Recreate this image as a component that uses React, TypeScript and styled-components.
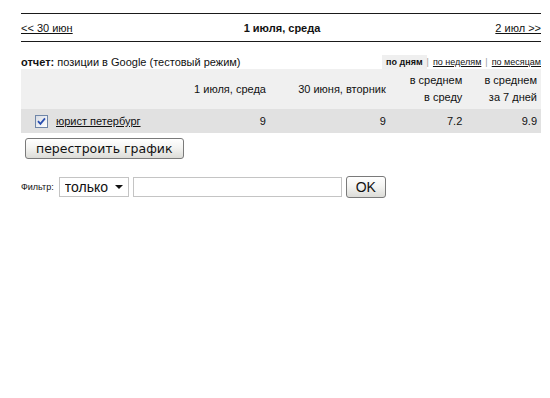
import * as React from "react";
import styled, { createGlobalStyle } from "styled-components";

const GlobalStyle = createGlobalStyle`
  html, body {
    margin: 0;
    padding: 0;
    background: #fff;
  }
  body {
    font-family: "Liberation Sans", Arial, sans-serif;
    font-size: 11px;
    color: #111;
  }
`;

const Page = styled.div`
  width: 520px;
  padding: 13px 0 0 21px;
`;

const DayNav = styled.div`
  display: flex;
  justify-content: space-between;
  align-items: center;
  height: 27px;
  border-top: 1px solid #1a1a1a;
  border-bottom: 1px solid #1a1a1a;
  font-size: 11px;
`;

const NavLink = styled.a`
  color: #111;
  text-decoration: underline;
  cursor: pointer;
`;

const Today = styled.b`
  font-size: 11px;
  margin-right: 4px;
`;

const ReportBar = styled.div`
  display: flex;
  justify-content: space-between;
  align-items: center;
  box-sizing: border-box;
  height: 27px;
  padding-top: 12px;
`;

const Title = styled.div`
  font-size: 11px;
  b {
    font-weight: bold;
  }
`;

const Periods = styled.div`
  display: flex;
  align-items: center;
  font-size: 9px;
  color: #999;
`;

const Period = styled.span<{ $active?: boolean }>`
  padding: 2px 4px;
  color: #111;
  font-weight: ${(p) => (p.$active ? "bold" : "normal")};
  background: ${(p) => (p.$active ? "#efefef" : "transparent")};
  text-decoration: ${(p) => (p.$active ? "none" : "underline")};
  cursor: pointer;
  &:last-child {
    padding-right: 0;
  }
`;

const Table = styled.table`
  width: 520px;
  border-collapse: collapse;
  font-size: 11px;
  th {
    font-weight: normal;
    text-align: right;
    padding: 3px 4px;
    line-height: 17px;
    background: #f0f0f0;
    height: 32px;
    vertical-align: middle;
  }
  td {
    text-align: right;
    padding: 0 4px;
    height: 24px;
    background: #e1e1e1;
  }
`;

const KeywordCell = styled.td`
  && {
    text-align: left;
    padding-left: 14px;
  }
  label {
    display: flex;
    align-items: center;
    gap: 8px;
    cursor: pointer;
  }
  input {
    display: none;
  }
`;

const CheckBox = styled.span`
  display: inline-flex;
  align-items: center;
  justify-content: center;
  box-sizing: border-box;
  width: 13px;
  height: 13px;
  border: 1px solid #6f86a8;
  background: linear-gradient(135deg, #d8dce4, #ffffff);
`;

const Button = styled.button`
  font-family: "DejaVu Sans", Verdana, sans-serif;
  font-size: 12.5px;
  color: #111;
  background: linear-gradient(#ffffff, #f4f4f2 45%, #dcdcd8);
  border: 1px solid #7a7a7a;
  border-radius: 3px;
  padding: 0 10px;
  height: 21px;
  cursor: pointer;
`;

const Rebuild = styled.div`
  padding: 5px 0 0 4px;
`;

const FilterRow = styled.div`
  display: flex;
  align-items: center;
  gap: 4px;
  margin-top: 17px;
`;

const FilterLabel = styled.span`
  font-size: 9px;
  margin-right: 1px;
`;

const SelectWrap = styled.div`
  position: relative;
  width: 70px;
  height: 20px;
`;

const Select = styled.select`
  appearance: none;
  width: 100%;
  height: 100%;
  box-sizing: border-box;
  border: 1px solid #c4c4c4;
  background: #fff;
  font-family: "Liberation Sans", Arial, sans-serif;
  font-size: 14px;
  color: #111;
  padding: 0 0 0 5px;
`;

const Arrow = styled.span`
  position: absolute;
  right: 6px;
  top: 8px;
  border-left: 4px solid transparent;
  border-right: 4px solid transparent;
  border-top: 4px solid #111;
  pointer-events: none;
`;

const TextInput = styled.input`
  width: 209px;
  height: 20px;
  box-sizing: border-box;
  border: 1px solid #c4c4c4;
  padding: 0 3px;
`;

const OkButton = styled(Button)`
  width: 40px;
  padding: 0;
  font-family: "Liberation Sans", Arial, sans-serif;
  font-size: 14px;
  height: 22px;
`;

export default function App() {
  const [checked, setChecked] = React.useState(true);
  return (
    <Page>
      <GlobalStyle />
      <DayNav>
        <NavLink>&lt;&lt; 30 июн</NavLink>
        <Today>1 июля, среда</Today>
        <NavLink>2 июл &gt;&gt;</NavLink>
      </DayNav>
      <ReportBar>
        <Title>
          <b>отчет:</b> позиции в Google (тестовый режим)
        </Title>
        <Periods>
          <Period $active>по дням</Period>|<Period>по неделям</Period>|
          <Period>по месяцам</Period>
        </Periods>
      </ReportBar>
      <Table>
        <thead>
          <tr>
            <th style={{ width: 150 }}></th>
            <th style={{ width: 90 }}>1 июля, среда</th>
            <th style={{ width: 116 }}>30 июня, вторник</th>
            <th style={{ width: 70 }}>
              в среднем
              <br />в среду
            </th>
            <th style={{ width: 68 }}>
              в среднем
              <br />
              за 7 дней
            </th>
          </tr>
        </thead>
        <tbody>
          <tr>
            <KeywordCell>
              <label>
                <input
                  type="checkbox"
                  checked={checked}
                  onChange={(e) => setChecked(e.target.checked)}
                />
                <CheckBox>
                  {checked && (
                    <svg width="9" height="9" viewBox="0 0 9 9">
                      <path
                        d="M1 4.2 L3.4 6.8 L8 1.4"
                        fill="none"
                        stroke="#2a4fb0"
                        strokeWidth="1.8"
                      />
                    </svg>
                  )}
                </CheckBox>
                <NavLink>юрист петербург</NavLink>
              </label>
            </KeywordCell>
            <td>9</td>
            <td>9</td>
            <td>7.2</td>
            <td>9.9</td>
          </tr>
        </tbody>
      </Table>
      <Rebuild>
        <Button>перестроить график</Button>
      </Rebuild>
      <FilterRow>
        <FilterLabel>Фильтр:</FilterLabel>
        <SelectWrap>
          <Select defaultValue="only">
            <option value="only">только</option>
            <option value="except">кроме</option>
          </Select>
          <Arrow />
        </SelectWrap>
        <TextInput type="text" />
        <OkButton>OK</OkButton>
      </FilterRow>
    </Page>
  );
}
